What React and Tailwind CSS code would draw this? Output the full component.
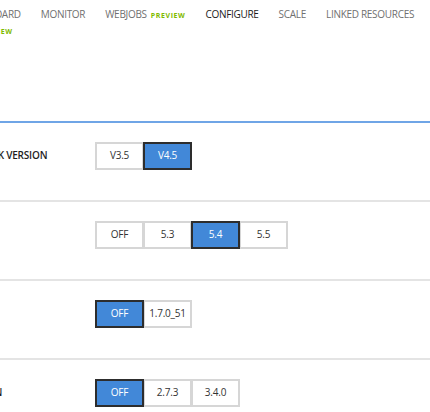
import React, { useState } from 'react';

const navItems = ['MONITOR', 'WEBJOBS', 'CONFIGURE', 'SCALE', 'LINKED RESOURCES'];

const settings = [
  { label: '.NET FRAMEWORK VERSION', options: ['V3.5', 'V4.5'], selected: 'V4.5' },
  { label: 'PHP VERSION', options: ['OFF', '5.3', '5.4', '5.5'], selected: '5.4' },
  { label: 'JAVA VERSION', options: ['OFF', '1.7.0_51'], selected: 'OFF' },
  { label: 'PYTHON VERSION', options: ['OFF', '2.7.3', '3.4.0'], selected: 'OFF' },
];

const Toggle = ({ options, value, onChange }) => (
  <div className="flex">
    {options.map((opt, i) => (
      <button
        key={opt}
        onClick={() => onChange(opt)}
        className={`h-[28px] w-[49px] border-2 text-[10px] tracking-[-0.2px] ${i > 0 ? '-ml-[1px]' : ''} ${
          opt === value
            ? 'relative z-10 border-[#2d2d2d] bg-[#4288d8] text-white'
            : 'border-[#d6d6d6] bg-white text-[#333]'
        }`}
      >
        {opt}
      </button>
    ))}
  </div>
);

const App = () => {
  const [values, setValues] = useState(settings.map((s) => s.selected));

  return (
    <div className="h-[412px] w-[430px] overflow-hidden bg-white font-['Open_Sans',sans-serif]">
      {/* top nav */}
      <nav className="-ml-[37px] flex items-start gap-[20px] whitespace-nowrap pt-[7px] text-[10px] tracking-[-0.3px] text-[#707070]">
        <div className="flex flex-col">
          <span>DASHBOARD</span>
          <span className="ml-[15px] mt-[5px] text-[7px] font-bold tracking-[0.6px] text-[#7fba00]">PREVIEW</span>
        </div>
        {navItems.map((item) => (
          <span key={item} className={item === 'CONFIGURE' ? 'text-[#1b1b1b]' : ''}>
            {item}
            {item === 'WEBJOBS' && (
              <span className="ml-[4px] text-[7px] font-bold tracking-[0.6px] text-[#7fba00]">PREVIEW</span>
            )}
          </span>
        ))}
      </nav>

      {/* settings */}
      <div className="mt-[83px] border-t-2 border-[#6fa5e6]">
        {settings.map((s, i) => (
          <div key={s.label} className={i > 0 ? 'border-t-2 border-[#e4e4e4]' : ''}>
            <div className="-ml-[81px] flex items-center pt-[19px] pb-[30px]">
              <div className="w-[176px] whitespace-nowrap text-[10px] font-semibold tracking-[-0.2px] text-[#1e1e1e]">{s.label}</div>
              <Toggle
                options={s.options}
                value={values[i]}
                onChange={(v) => setValues(values.map((x, j) => (j === i ? v : x)))}
              />
            </div>
          </div>
        ))}
      </div>
    </div>
  );
};

export default App;
